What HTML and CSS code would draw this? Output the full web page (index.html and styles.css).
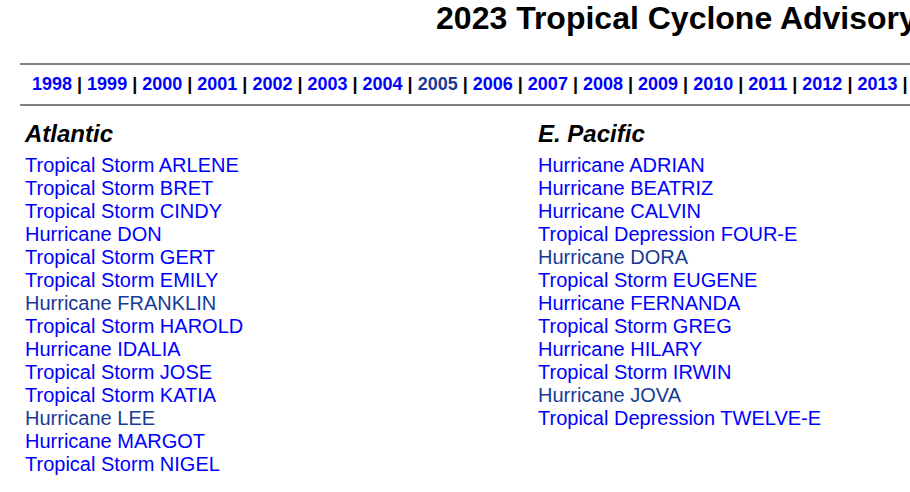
FILE: index.html
```html
<!DOCTYPE html>
<html lang="en">
<head>
    <meta charset="UTF-8">
    <title>2023 Tropical Cyclone Advisory Archive</title>
    <link rel="stylesheet" href="styles.css">
</head>
<body>

    <div class="page">
        <h1 class="title">2023 Tropical Cyclone Advisory Archive</h1>

        <div class="year-bar">
            <a href="#">1998</a> | <a href="#">1999</a> | <a href="#">2000</a> | <a href="#">2001</a> |
            <a href="#">2002</a> | <a href="#">2003</a> | <a href="#">2004</a> | <a href="#" class="seen">2005</a> |
            <a href="#">2006</a> | <a href="#">2007</a> | <a href="#">2008</a> | <a href="#">2009</a> |
            <a href="#">2010</a> | <a href="#">2011</a> | <a href="#">2012</a> | <a href="#">2013</a> |
            <a href="#">2014</a> | <a href="#">2015</a> | <a href="#">2016</a> | <a href="#">2017</a> |
            <a href="#">2018</a> | <a href="#">2019</a> | <a href="#">2020</a> | <a href="#">2021</a> |
            <a href="#">2022</a>
        </div>

        <div class="basins">
            <div class="basin">
                <h2>Atlantic</h2>
                <ul class="storms">
                    <li><a href="#">Tropical Storm ARLENE</a></li>
                    <li><a href="#">Tropical Storm BRET</a></li>
                    <li><a href="#">Tropical Storm CINDY</a></li>
                    <li><a href="#">Hurricane DON</a></li>
                    <li><a href="#">Tropical Storm GERT</a></li>
                    <li><a href="#">Tropical Storm EMILY</a></li>
                    <li><a href="#" class="seen">Hurricane FRANKLIN</a></li>
                    <li><a href="#">Tropical Storm HAROLD</a></li>
                    <li><a href="#">Hurricane IDALIA</a></li>
                    <li><a href="#">Tropical Storm JOSE</a></li>
                    <li><a href="#">Tropical Storm KATIA</a></li>
                    <li><a href="#" class="seen">Hurricane LEE</a></li>
                    <li><a href="#">Hurricane MARGOT</a></li>
                    <li><a href="#">Tropical Storm NIGEL</a></li>
                </ul>
            </div>

            <div class="basin">
                <h2>E. Pacific</h2>
                <ul class="storms">
                    <li><a href="#">Hurricane ADRIAN</a></li>
                    <li><a href="#">Hurricane BEATRIZ</a></li>
                    <li><a href="#">Hurricane CALVIN</a></li>
                    <li><a href="#">Tropical Depression FOUR-E</a></li>
                    <li><a href="#" class="seen">Hurricane DORA</a></li>
                    <li><a href="#">Tropical Storm EUGENE</a></li>
                    <li><a href="#">Hurricane FERNANDA</a></li>
                    <li><a href="#">Tropical Storm GREG</a></li>
                    <li><a href="#">Hurricane HILARY</a></li>
                    <li><a href="#">Tropical Storm IRWIN</a></li>
                    <li><a href="#" class="seen">Hurricane JOVA</a></li>
                    <li><a href="#">Tropical Depression TWELVE-E</a></li>
                </ul>
            </div>
        </div>
    </div>

</body>
</html>
```

FILE: styles.css
```css
html,
body {
    overflow: hidden;
}

body {
    font-family: 'Liberation Sans', Arial, Helvetica, sans-serif;
    color: #000;
    margin: 0;
    background-color: #fff;
}

a {
    color: #0000ff;
    text-decoration: none;
}

/* visited-looking links */
a.seen {
    color: #173a94;
}

.page {
    width: 1438px;
    margin-left: 20px;
}

.title {
    text-align: center;
    font-size: 32px;
    font-weight: bold;
    margin: 0 0 26px;
    white-space: nowrap;
}

.year-bar {
    border-top: 2px solid #828282;
    border-bottom: 2px solid #828282;
    padding: 9px 0 9px 12px;
    font-size: 18px;
    font-weight: bold;
    white-space: nowrap;
}

.basins {
    display: grid;
    grid-template-columns: 513px 513px;
    padding: 14px 0 0 5px;
}

.basin h2 {
    font-size: 24px;
    font-style: italic;
    font-weight: bold;
    margin: 0 0 6px;
}

.storms {
    list-style: none;
    margin: 0;
    padding: 0;
    font-size: 20px;
}
```
